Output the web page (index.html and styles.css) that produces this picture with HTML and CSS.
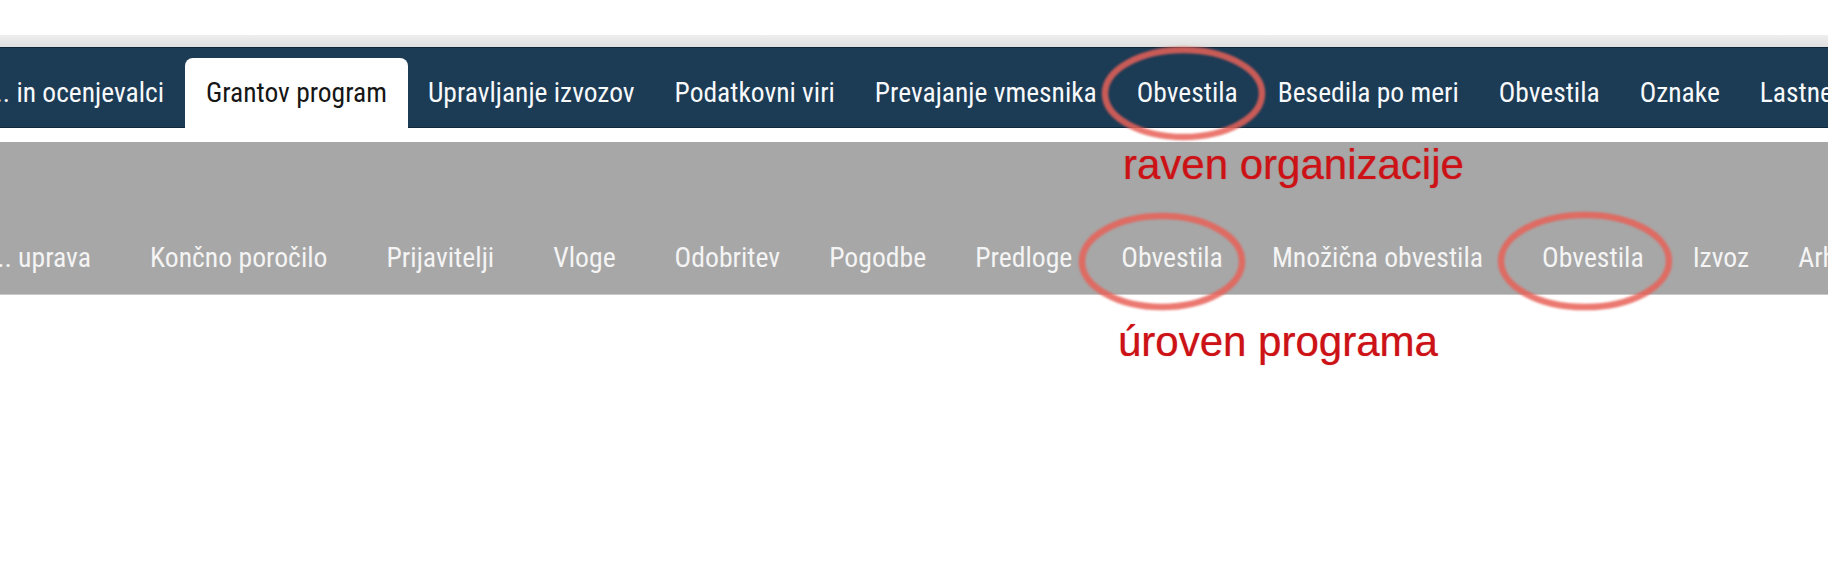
FILE: index.html
```html
<!DOCTYPE html>
<html lang="sl">
<head>
<meta charset="utf-8">
<title>Navigacija</title>
<link rel="stylesheet" href="styles.css">
</head>
<body>
<div class="page">
  <div class="topspace"></div>
  <div class="strip"></div>
  <nav class="mainnav">
    <a class="mi first"><span>... in ocenjevalci</span></a>
    <a class="mi active">Grantov program</a>
    <a class="mi">Upravljanje izvozov</a>
    <a class="mi">Podatkovni viri</a>
    <a class="mi">Prevajanje vmesnika</a>
    <a class="mi">Obvestila</a>
    <a class="mi">Besedila po meri</a>
    <a class="mi">Obvestila</a>
    <a class="mi">Oznake</a>
    <a class="mi">Lastne lastnosti</a>
  </nav>
  <div class="gap"></div>
  <nav class="subnav">
    <a class="si first"><span>... uprava</span></a>
    <a class="si sp">Končno poročilo</a>
    <a class="si sp">Prijavitelji</a>
    <a class="si sp">Vloge</a>
    <a class="si sp">Odobritev</a>
    <a class="si">Pogodbe</a>
    <a class="si">Predloge</a>
    <a class="si">Obvestila</a>
    <a class="si">Množična obvestila</a>
    <a class="si sp">Obvestila</a>
    <a class="si">Izvoz</a>
    <a class="si">Arhiv</a>
  </nav>

  <div class="note note-org">raven organizacije</div>
  <div class="note note-prog">úroven programa</div>

  <svg class="marks" width="1828" height="576" viewBox="0 0 1828 576" aria-hidden="true">
    <defs>
      <filter id="soft" x="-10%" y="-10%" width="120%" height="120%">
        <feGaussianBlur stdDeviation="1"/>
      </filter>
    </defs>
    <g fill="none" stroke="rgb(232,98,88)" stroke-opacity="0.85" stroke-width="6.5" filter="url(#soft)">
      <ellipse cx="1183.5" cy="93.5" rx="78.5" ry="43.5"/>
      <ellipse cx="1162" cy="261.5" rx="80" ry="45.5"/>
      <ellipse cx="1585" cy="261" rx="84" ry="46"/>
    </g>
  </svg>
</div>
</body>
</html>
```
FILE: styles.css
```css
html, body {
  margin: 0;
  padding: 0;
  background: #ffffff;
}

.page {
  position: relative;
  width: 1828px;
  height: 576px;
  overflow: hidden;
  font-family: "Roboto Condensed", Roboto, "Liberation Sans", sans-serif;
}

.topspace {
  height: 35px;
}

.strip {
  height: 12px;
  background: linear-gradient(#eeeeee, #dfdfdf);
}

.mainnav {
  display: flex;
  align-items: flex-end;
  height: 80px;
  border-top: 1px solid #0f2538;
  background: #1c3b55;
  box-shadow: inset 0 -1px 0 #10283c;
  white-space: nowrap;
  overflow: hidden;
}

.mi {
  flex: none;
  display: block;
  height: 70px;
  line-height: 70px;
  padding: 0 20px;
  font-size: 27.5px;
  color: #f7f9fb;
  text-decoration: none;
}

.mi.first {
  display: flex;
  justify-content: flex-end;
  width: 185px;
  box-sizing: border-box;
  padding: 0 21px 0 0;
}

.mi.active {
  padding: 0 21px;
  background: #ffffff;
  color: #161616;
  border-radius: 8px 8px 0 0;
}

.gap {
  height: 14px;
}

.subnav {
  display: flex;
  align-items: flex-end;
  box-sizing: border-box;
  height: 153px;
  padding-bottom: 10px;
  background: #a7a7a7;
  border-bottom: 1px solid #c9c9c9;
  white-space: nowrap;
  overflow: hidden;
}

.si {
  flex: none;
  display: block;
  line-height: 52px;
  margin-left: 49px;
  font-size: 27.7px;
  color: #f4f4f4;
  text-decoration: none;
}

.si.sp {
  margin-left: 59px;
}

.si.first {
  display: flex;
  justify-content: flex-end;
  width: 91px;
  margin-left: 0;
}

.note {
  position: absolute;
  font-family: "Liberation Sans", Arial, sans-serif;
  font-size: 42px;
  line-height: 42px;
  color: #cc1216;
  white-space: nowrap;
  text-shadow: 0 0 1px rgba(204, 18, 22, 0.6);
}

.note-org {
  left: 1123px;
  top: 144px;
}

.note-prog {
  left: 1118px;
  top: 321px;
}

.marks {
  position: absolute;
  left: 0;
  top: 0;
  pointer-events: none;
}
```
